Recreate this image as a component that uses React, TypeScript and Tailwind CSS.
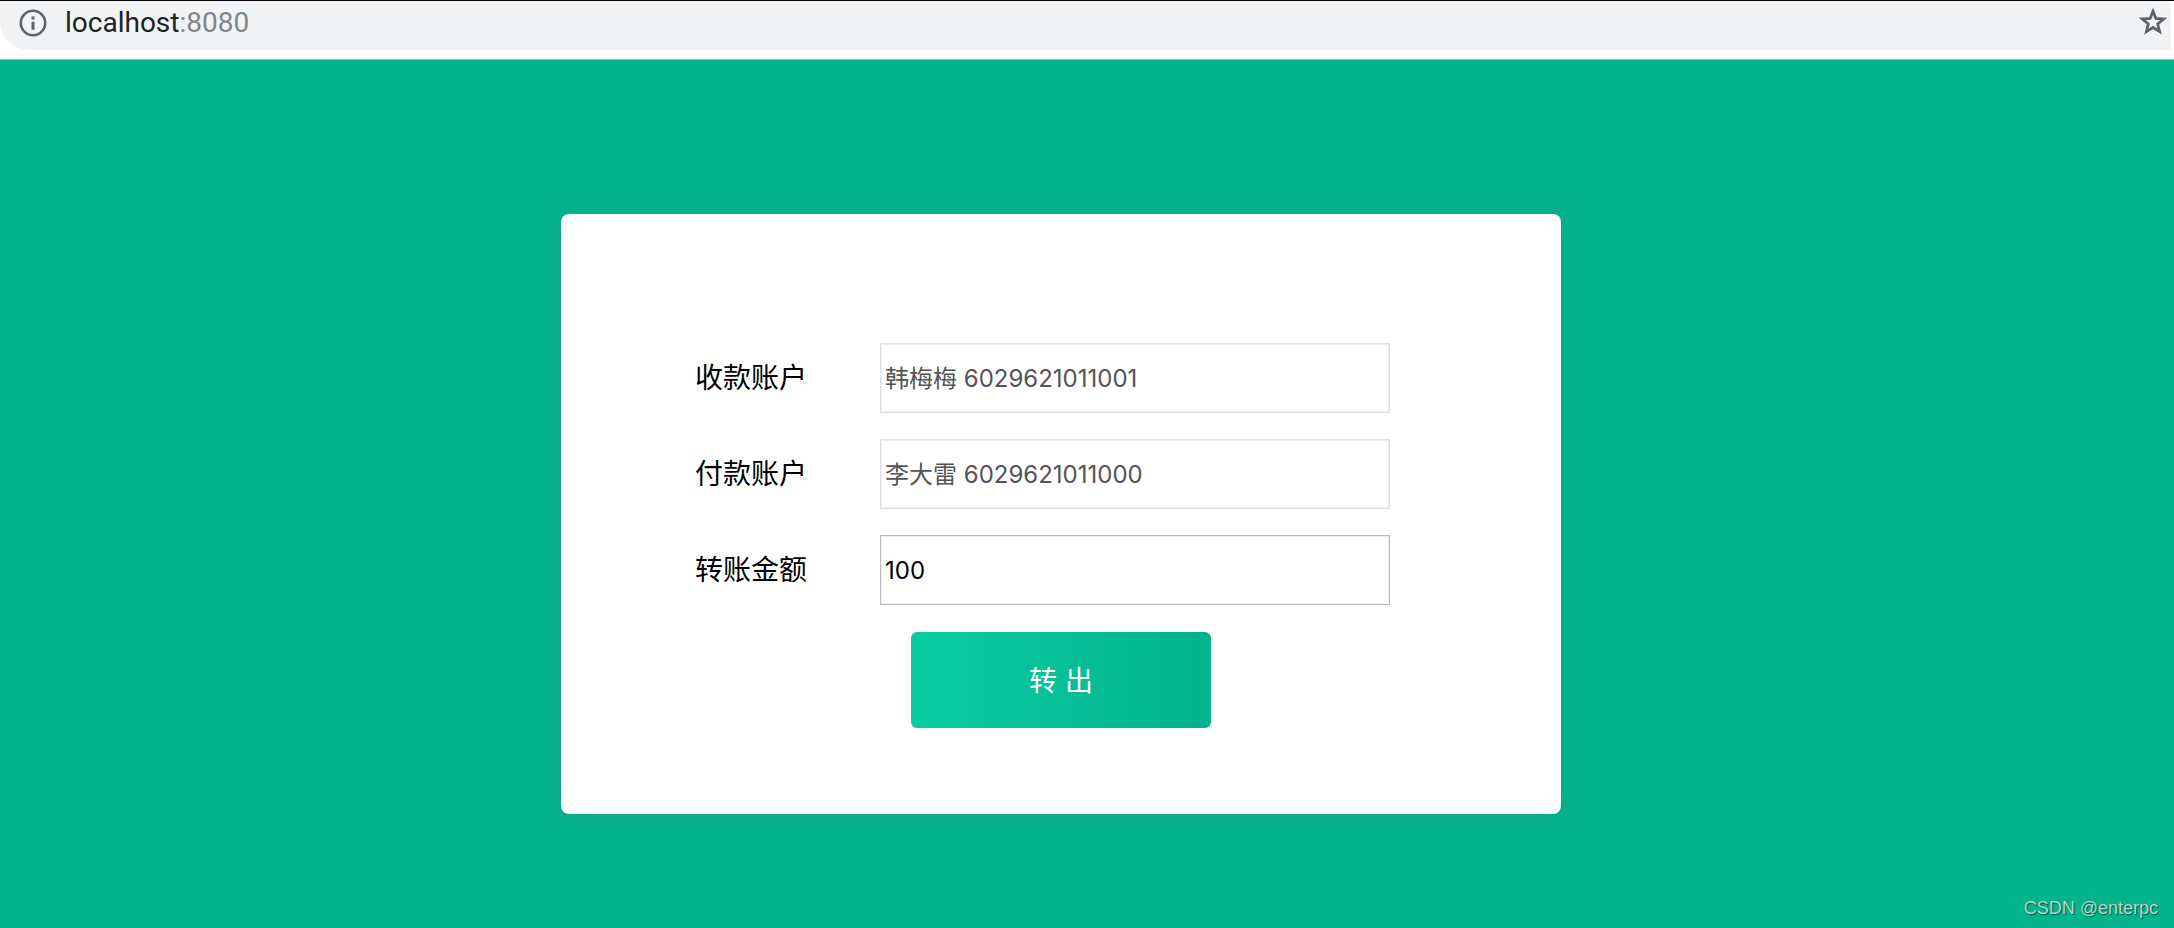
import { useState } from "react";

const accounts = [
  { id: "payee", label: "收款账户", value: "韩梅梅 6029621011001" },
  { id: "payer", label: "付款账户", value: "李大雷 6029621011000" },
];

const labelClass = "w-[185px] shrink-0 text-[28px] text-black";
const inputClass =
  "h-[70px] w-full max-w-[510px] border px-1 text-2xl shadow-[inset_0_0_0_1px_#f0f0f0] outline-none";

function InfoIcon() {
  return (
    <svg viewBox="0 0 28 28" className="size-7 shrink-0" aria-hidden="true">
      <circle cx="14" cy="14" r="12.2" fill="none" stroke="#5f6368" strokeWidth="2.6" />
      <path d="M12.5 7.5h3v3h-3zM12.5 12.7h3v8h-3z" fill="#5f6368" />
    </svg>
  );
}

function StarIcon() {
  return (
    <svg viewBox="0 0 30 30" className="size-[30px]" aria-hidden="true">
      <path
        d="M15 4.2l2.9 7.2 7.8.6-6 5 1.9 7.6-6.6-4.1-6.6 4.1 1.9-7.6-6-5 7.8-.6z"
        fill="none"
        stroke="#5f6368"
        strokeWidth="2.8"
      />
    </svg>
  );
}

function AddressBar() {
  return (
    <header className="h-[60px] border-t border-b border-t-black border-b-[#b0b4b4] bg-white">
      <div className="mr-[3px] flex h-[49px] items-start justify-between rounded-bl-[28px] bg-[#f1f3f4] pl-[19px] pr-[3px] pt-1">
        <div className="flex items-center gap-[18px]">
          <InfoIcon />
          <span className="text-[28px] leading-9 text-[#202124] font-[Roboto,sans-serif]">
            localhost<span className="text-[#80868b]">:8080</span>
          </span>
        </div>
        <button type="button" aria-label="Bookmark this tab" className="pt-0.5">
          <StarIcon />
        </button>
      </div>
    </header>
  );
}

export default function App() {
  const [amount, setAmount] = useState("100");

  return (
    <div className="flex min-h-screen flex-col bg-[#03b38c] font-[Inter,'Noto_Sans_CJK_SC',sans-serif]">
      <AddressBar />

      <main className="flex grow flex-col items-center pt-[154px] pr-[52px]">
        <form
          onSubmit={(e) => e.preventDefault()}
          className="flex w-full max-w-[1000px] flex-col gap-[26px] rounded-lg bg-white pt-[129px] pr-[171px] pb-[86px] pl-[134px] shadow-[0_0_20px_rgba(50,140,130,0.3)]"
        >
          {accounts.map((account) => (
            <div key={account.id} className="flex items-center">
              <label htmlFor={account.id} className={labelClass}>
                {account.label}
              </label>
              <input
                id={account.id}
                type="text"
                value={account.value}
                disabled
                className={`${inputClass} border-[#dfdfdf] bg-white pb-1 text-[#545454]`}
              />
            </div>
          ))}
          <div className="flex items-center">
            <label htmlFor="amount" className={labelClass}>
              转账金额
            </label>
            <input
              id="amount"
              type="text"
              value={amount}
              onChange={(e) => setAmount(e.target.value)}
              className={`${inputClass} border-[#bcbcbc] bg-white text-black`}
            />
          </div>
          <div className="flex justify-center pt-px pl-[37px]">
            <button
              type="submit"
              className="h-24 w-[300px] rounded-md bg-linear-to-r from-[#0acda2] to-[#03b38c] pt-0.5 text-[28px] text-white"
            >
              转 出
            </button>
          </div>
        </form>
      </main>

      <footer className="flex justify-end pr-4 pb-2">
        <span className="text-lg leading-6 text-[#b8d3cc] font-['Liberation_Sans',Arial,sans-serif] [text-shadow:1px_1px_1px_rgba(0,0,0,0.5)]">
          CSDN @enterpc
        </span>
      </footer>
    </div>
  );
}
